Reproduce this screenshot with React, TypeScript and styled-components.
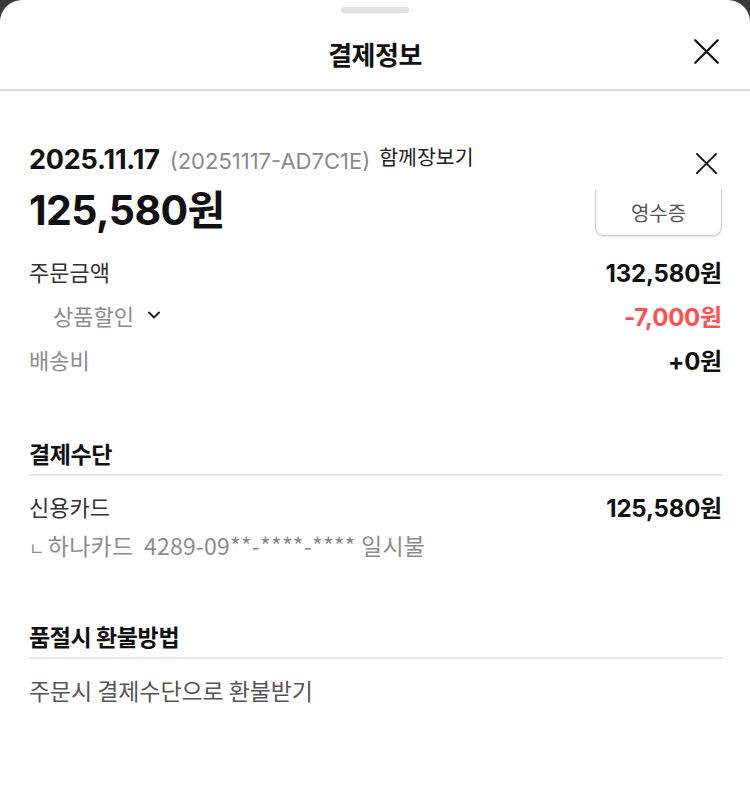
import React from 'react';
import styled, { createGlobalStyle } from 'styled-components';

const GlobalStyle = createGlobalStyle`
  html, body {
    margin: 0;
    padding: 0;
    background: #3a3a3a;
  }
  body {
    font-family: "Noto Sans CJK KR", "Noto Sans", sans-serif;
    color: #111;
  }
`;

const Sheet = styled.div`
  width: 750px;
  height: 810px;
  background: #fff;
  border-radius: 22px 22px 0 0;
  overflow: hidden;
  display: flex;
  flex-direction: column;
`;

const Handle = styled.div`
  align-self: center;
  width: 68px;
  height: 6px;
  margin-top: 7px;
  border-radius: 3px;
  background: #e2e2e2;
`;

const Header = styled.header`
  position: relative;
  height: 76px;
  display: flex;
  align-items: center;
  justify-content: center;
  border-bottom: 2px solid #d9dcde;
`;

const Title = styled.h1`
  margin: 0;
  font-size: 26px;
  line-height: 32px;
  font-weight: 700;
  letter-spacing: -0.5px;
  position: relative;
  top: 3px;
`;

const CloseButton = styled.button`
  position: absolute;
  right: 30px;
  top: 50%;
  transform: translateY(-50%);
  width: 28px;
  height: 28px;
  padding: 0;
  border: none;
  background: none;
  display: flex;
  align-items: center;
  justify-content: center;
`;

const Body = styled.main`
  padding: 53px 28px 0 29px;
`;

const Summary = styled.section`
  position: relative;
`;

const DateLine = styled.div`
  display: flex;
  align-items: baseline;
  gap: 10px;
  height: 32px;
  line-height: 32px;
`;

const DateText = styled.span`
  font-family: "Inter", "Noto Sans CJK KR", sans-serif;
  font-size: 27px;
  font-weight: 700;
  letter-spacing: -0.2px;
`;

const OrderNo = styled.span`
  font-family: "Inter", "Noto Sans CJK KR", sans-serif;
  font-size: 22px;
  color: #8a8a8a;
`;

const Together = styled.span`
  font-size: 20.5px;
  color: #222;
  position: relative;
  top: -4px;
  margin-left: -1px;
`;

const ItemClose = styled.button`
  position: absolute;
  right: 4px;
  top: 8px;
  width: 24px;
  height: 24px;
  padding: 0;
  border: none;
  background: none;
`;

const TotalLine = styled.div`
  display: flex;
  align-items: center;
  justify-content: space-between;
  margin-top: 10px;
  height: 48px;
`;

const Total = styled.span`
  font-family: "Inter", "Noto Sans CJK KR", sans-serif;
  font-size: 41px;
  line-height: 48px;
  font-weight: 700;
  letter-spacing: -0.6px;
`;

const ReceiptButton = styled.button`
  width: 127px;
  height: 47px;
  border: 1px solid #cfcfcf;
  border-top-color: transparent;
  border-radius: 0 0 9px 9px;
  background: #fff;
  box-shadow: 0 1px 2px rgba(0, 0, 0, 0.12);
  font-family: inherit;
  font-size: 20px;
  color: #555;
  margin-top: 4px;
`;

const Rows = styled.div`
  display: flex;
  flex-direction: column;
  margin-top: 15px;
`;

const Row = styled.div<{ indent?: boolean }>`
  display: flex;
  align-items: center;
  justify-content: space-between;
  height: 44px;
  padding-left: ${(p) => (p.indent ? '24px' : '0')};
`;

const Label = styled.span<{ tone?: 'dark' | 'muted' }>`
  display: flex;
  align-items: center;
  gap: 13px;
  font-size: 22px;
  color: ${(p) => (p.tone === 'muted' ? '#8c8c8c' : '#333')};
`;

const Amount = styled.span<{ negative?: boolean }>`
  font-family: "Inter", "Noto Sans CJK KR", sans-serif;
  font-size: 24px;
  font-weight: 700;
  letter-spacing: -0.2px;
  color: ${(p) => (p.negative ? '#ff4f4f' : '#111')};
`;

const Section = styled.section<{ top: number }>`
  margin-top: ${(p) => p.top}px;
`;

const SectionTitle = styled.h2<{ gap: number }>`
  margin: 0;
  padding-bottom: ${(p) => p.gap}px;
  font-size: 23px;
  line-height: 30px;
  font-weight: 700;
  letter-spacing: -0.4px;
  border-bottom: 2px solid #e6e6e6;
`;

const SectionBody = styled.div<{ top: number }>`
  padding-top: ${(p) => p.top}px;
  display: flex;
  flex-direction: column;
  gap: 2px;
`;

const SubText = styled.div<{ tone?: 'muted' | 'body' }>`
  font-size: 23px;
  line-height: 30px;
  color: ${(p) => (p.tone === 'muted' ? '#8c8c8c' : '#555')};
  letter-spacing: ${(p) => (p.tone === 'muted' ? '0.2px' : '-0.1px')};
`;

const Corner = styled.span`
  font-size: 17px;
  margin-right: 3px;
`;

const XIcon = ({ size, stroke }: { size: number; stroke: number }) => (
  <svg width={size} height={size} viewBox="0 0 24 24" fill="none">
    <path d="M2 2L22 22M22 2L2 22" stroke="#111" strokeWidth={stroke} strokeLinecap="round" />
  </svg>
);

const Chevron = () => (
  <svg width="14" height="10" viewBox="0 0 14 10" fill="none">
    <path d="M2 2.5L7 7.5L12 2.5" stroke="#222" strokeWidth="2" strokeLinecap="round" strokeLinejoin="round" />
  </svg>
);

export default function App() {
  return (
    <>
      <GlobalStyle />
      <Sheet>
        <Handle />
        <Header>
          <Title>결제정보</Title>
          <CloseButton>
            <XIcon size={27} stroke={2} />
          </CloseButton>
        </Header>
        <Body>
          <Summary>
            <DateLine>
              <DateText>2025.11.17</DateText>
              <OrderNo>(20251117-AD7C1E)</OrderNo>
              <Together>함께장보기</Together>
            </DateLine>
            <ItemClose>
              <XIcon size={23} stroke={2} />
            </ItemClose>
            <TotalLine>
              <Total>125,580원</Total>
              <ReceiptButton>영수증</ReceiptButton>
            </TotalLine>
          </Summary>

          <Rows>
            <Row>
              <Label>주문금액</Label>
              <Amount>132,580원</Amount>
            </Row>
            <Row indent>
              <Label tone="muted">
                상품할인 <Chevron />
              </Label>
              <Amount negative>-7,000원</Amount>
            </Row>
            <Row>
              <Label tone="muted">배송비</Label>
              <Amount>+0원</Amount>
            </Row>
          </Rows>

          <Section top={57}>
            <SectionTitle gap={6}>결제수단</SectionTitle>
            <SectionBody top={8}>
              <Row>
                <Label>신용카드</Label>
                <Amount>125,580원</Amount>
              </Row>
              <SubText tone="muted">
                <Corner>ㄴ</Corner>하나카드&nbsp; 4289-09**-****-**** 일시불
              </SubText>
            </SectionBody>
          </Section>

          <Section top={58}>
            <SectionTitle gap={6}>품절시 환불방법</SectionTitle>
            <SectionBody top={16}>
              <SubText>주문시 결제수단으로 환불받기</SubText>
            </SectionBody>
          </Section>
        </Body>
      </Sheet>
    </>
  );
}
